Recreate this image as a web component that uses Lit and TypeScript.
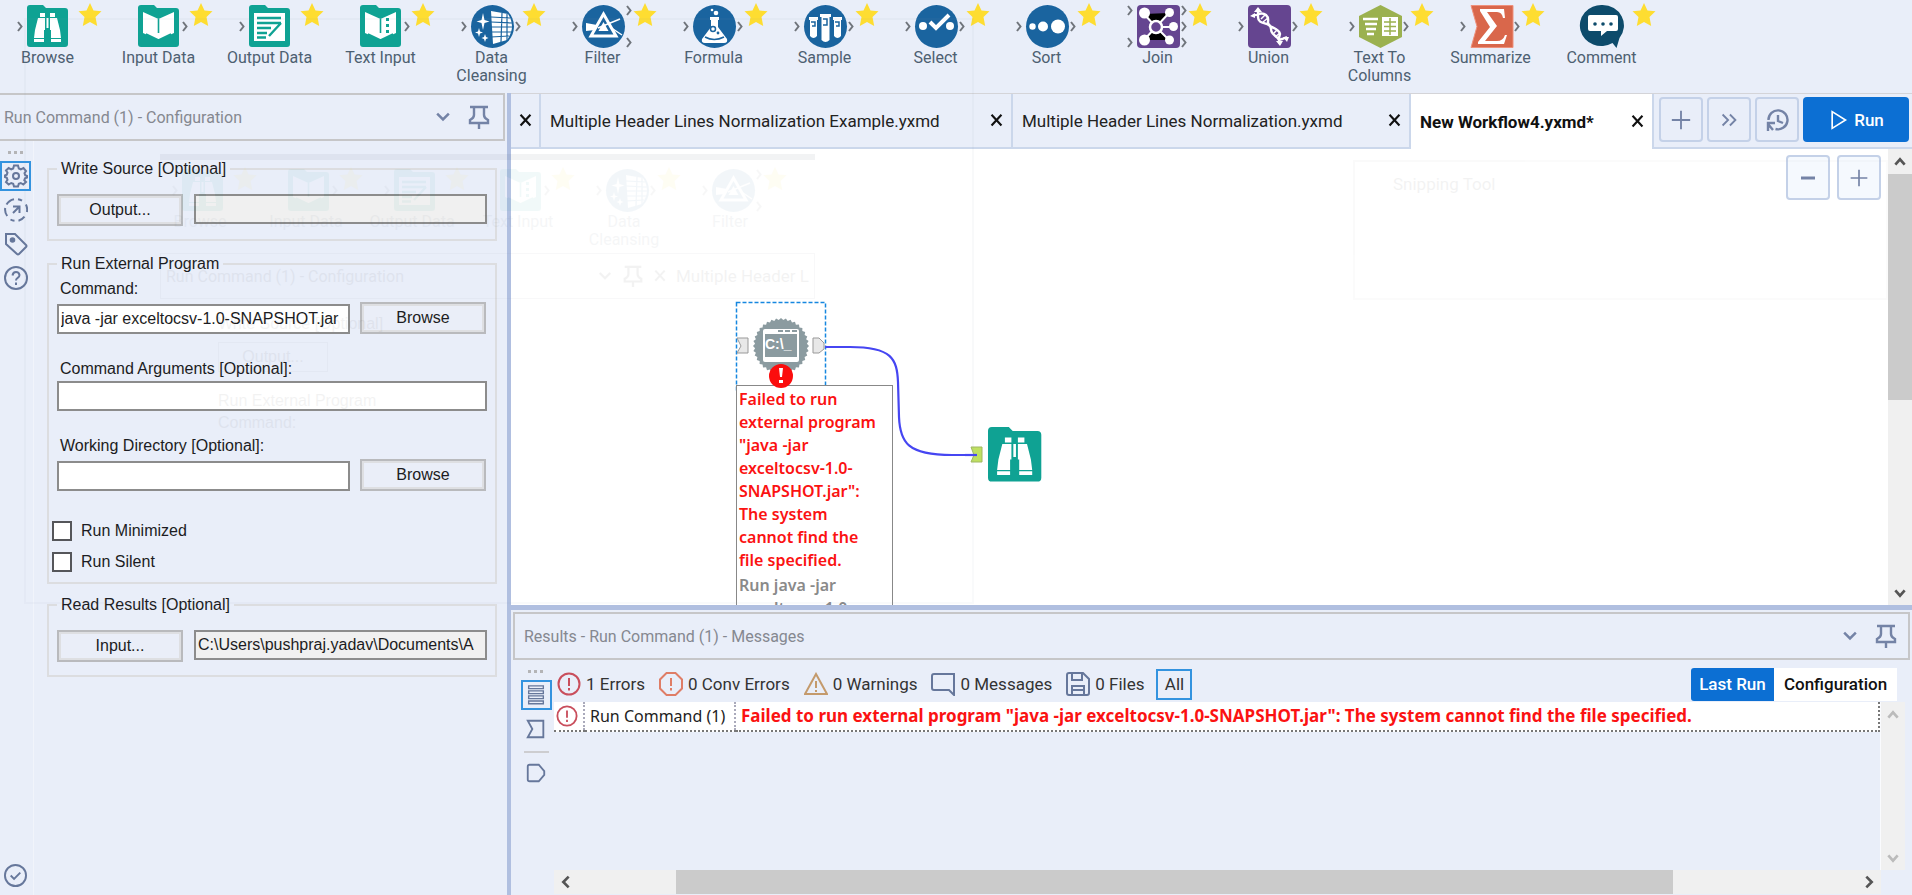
import { LitElement, html, svg, css } from "lit";
import { customElement } from "lit/decorators.js";
import { classMap } from "lit/directives/class-map.js";

const folder = svg`<path fill="#0fa293" d="M3 0h13l3 3h19a3 3 0 0 1 3 3v33a3 3 0 0 1-3 3H3a3 3 0 0 1-3-3V3a3 3 0 0 1 3-3z"/>`;
const disc = svg`<circle cx="21.500" cy="21.500" r="21.500" fill="#1a649f"/>`;
const binoculars = svg`<g fill="#fff"><path d="M13 8h5v4h-5zM23 8h5v4h-5zM11 13h7v12h-1v8H7l1-8zM30 13h-7v12h1v8h10l-1-8zM19.500 13h2v10h-2zM7 34h10v3H7zM24 34h10v3H24z"/></g>`;

interface Tool { name: string; icon: unknown; left: number[]; right: number[]; }

const tools: Tool[] = [
  { name: "Browse", left: [21], right: [], icon: svg`${folder}${binoculars}` },
  { name: "Input Data", left: [], right: [21], icon: svg`${folder}<path fill="#fff" d="M5 7l15.500 7v21L5 28zM36 7l-15.500 7v21L36 28z"/><path fill="none" stroke="#0fa293" stroke-width="1.600" d="M20.500 14v14M8 29l12.500 6 12.500-6"/>` },
  { name: "Output Data", left: [21], right: [], icon: svg`${folder}<path fill="#fff" d="M5 8h31v28H5z"/><path fill="none" stroke="#0fa293" stroke-width="2.400" d="M8 13h24M8 18h24M8 23h14M8 28h10M8 32.500h9M20 31l12-13"/>` },
  { name: "Text Input", left: [], right: [21], icon: svg`${folder}<path fill="#fff" d="M5 7l15.500 7v21L5 28zM36 7l-15.500 7v21L36 28z"/><path fill="none" stroke="#0fa293" stroke-width="1.600" d="M20.500 14v14M8 29l12.500 6 12.500-6"/><path fill="#0fa293" d="M26 13h3v3h-3zM26 19h3v3h-3zM26 25h3v3h-3z"/>` },
  { name: "Data Cleansing", left: [21], right: [21], icon: svg`${disc}<path fill="#fff" d="M12 8l1.500 7 5 1.500-5 1.500L12 25l-1.500-7-5-1.500 5-1.500zM8 23l1 3.500 3 1-3 1L8 32l-1-3.500-3-1 3-1zM14 29l1 3 2.500 1-2.500 1-1 3-1-3-2.500-1 2.500-1zM20 6l17 3q4 6 4 12.500T36 35l-14 4z"/><path fill="none" stroke="#1a649f" stroke-width="1.200" d="M20 12l19 1M20 17l21 1M20 22h21M20 27h21M20 32l18-1M31 8l-1 29M36 9v27"/>` },
  { name: "Filter", left: [21], right: [5, 37], icon: svg`${disc}<path fill="none" stroke="#fff" stroke-width="3" d="M21.500 9L34 31H9z"/><path fill="#fff" d="M4 18l11 2-2 5-9 1z"/><path stroke="#fff" stroke-width="1.500" d="M16 23l22-9M28 22l12 8"/><path fill="#fff" d="M21.500 17l5 9h-10z"/>` },
  { name: "Formula", left: [21], right: [21], icon: svg`${disc}<path fill="#fff" d="M17 12h9v3h-1v7l9 12q1 4-3 4H12q-4 0-3-4l9-12v-7h-1z"/><circle cx="23" cy="8" r="2.300" fill="#fff"/><circle cx="19" cy="5" r="1.300" fill="#fff"/><path fill="none" stroke="#1a649f" stroke-width="1.600" d="M12 32q9 5 19 0"/><circle cx="20" cy="24" r="2.500" fill="none" stroke="#1a649f" stroke-width="1.500"/><circle cx="25" cy="28" r="1.400" fill="#1a649f"/>` },
  { name: "Sample", left: [21], right: [21], icon: svg`${disc}<path fill="#fff" d="M5 12h9v3h-1v16q-3.500 4-7 0V15H5zM16 9h11v3h-1.500v23q-4 4-8 0V12H16zM29 12h9v3h-1v16q-3.500 4-7 0V15h-1z"/><path fill="none" stroke="#1a649f" stroke-width="1.500" d="M7 17h4v4H8M19 14h4v6h-4M31 17h4v4h-3"/>` },
  { name: "Select", left: [21], right: [21], icon: svg`${disc}<circle cx="8" cy="21" r="4" fill="#fff"/><circle cx="35" cy="21" r="4" fill="#fff"/><path fill="none" stroke="#fff" stroke-width="4" d="M15 17l6 6 13-13"/>` },
  { name: "Sort", left: [21], right: [21], icon: svg`${disc}<circle cx="6.500" cy="21.500" r="3.200" fill="#fff"/><circle cx="17" cy="21.500" r="5" fill="#fff"/><circle cx="32" cy="21.500" r="7" fill="#fff"/>` },
  { name: "Join", left: [5, 37], right: [5, 21, 37], icon: svg`<rect width="43" height="43" rx="4" fill="#654590"/><g stroke="#fff" stroke-width="2"><path d="M7 9l12 13 13-14M19 22h17M7 35l12-13 13 13"/></g><g fill="#fff"><circle cx="7.500" cy="8" r="5.500"/><circle cx="32.500" cy="7.500" r="4.500"/><circle cx="36.500" cy="21.500" r="4.500"/><circle cx="7.500" cy="35" r="5.500"/><circle cx="32.500" cy="35" r="4.500"/></g><circle cx="19" cy="22" r="6" fill="#654590" stroke="#fff" stroke-width="2.500"/>` },
  { name: "Union", left: [21], right: [21], icon: svg`<rect width="43" height="43" rx="4" fill="#654590"/><g fill="none" stroke="#fff" stroke-width="2.400"><path d="M10 5v7c0 9 13 4 13 12s9 6 9 15M5 11l5-2c7-2 11 2 10 8s11 5 12 12l-1 4q0 2 3 1l5-2"/></g><path fill="#fff" d="M10 2l4 5H6zM2 11l5-3v5zM32 41l-4-5h7zM41 32l-6 0 4 5z"/><path stroke="#fff" stroke-width="1.500" d="M13 14l4-4M15 17l5-4M25 29l4-4M27 32l5-4"/>` },
  { name: "Text To Columns", left: [21], right: [21], icon: svg`<path fill="#9bb14f" d="M21.500 0L43 11v21L21.500 43 0 32V11z"/><g fill="none" stroke="#fff" stroke-width="2.600"><path d="M4 14h15M6 19h12M7 24h10M8 29h7"/></g><path fill="#fff" d="M23 12h16v19H23z"/><path fill="none" stroke="#9bb14f" stroke-width="1.500" d="M25 17h12M25 21.500h12M25 26h12M31 13v17"/>` },
  { name: "Summarize", left: [21], right: [21], icon: svg`<path fill="#d9674b" stroke="#ef917c" d="M1 .500h42v42H1l6-21z"/><path fill="#fff" d="M10 4h24l1 9h-2q-1-6-6-6H17l10 14-12 15h12q6 0 8-6h2l-3 9H8v-2l12-15L10 6z"/>` },
  { name: "Comment", left: [], right: [], icon: svg`<path fill="#0d4b6b" d="M21.500 0a21.500 20.500 0 0 1 17 33l-3 10-4-5a21.500 20.500 0 1 1-10-38z"/><path fill="#fff" d="M9 10h26q2 0 2 2v12q0 2-2 2h-9l-6 5v-5H9q-2 0-2-2V12q0-2 2-2z"/><g fill="#0d4b6b"><circle cx="14" cy="19" r="1.800"/><circle cx="22" cy="19" r="1.800"/><circle cx="30" cy="19" r="1.800"/></g>` },
];

const toolArt = (t: Tool) => html`<svg class="art" viewBox="0 0 96 48" width="96" height="48" aria-hidden="true">
  <g transform="translate(21 5)">${t.icon}</g>
  <g fill="none" stroke="#70757c" stroke-width="2">
    ${t.left.map((y) => svg`<path d="M12 ${y + 1}l3.500 4.500-3.500 4.500"/>`)}
    ${t.right.map((y) => svg`<path d="M66 ${y + 1}l3.500 4.500-3.500 4.500"/>`)}
  </g>
  <path fill="#fedd31" d="M84 3l3.500 7.500 8 .8-6 5.600 1.700 9.100L84 22l-7.200 4 1.700-9.100-6-5.600 8-.8z"/>
</svg>`;

const icon = (body: unknown, size = 24) =>
  html`<svg viewBox="0 0 24 24" width=${size} height=${size} fill="none" stroke="currentColor" stroke-width="2" aria-hidden="true">${body}</svg>`;

const dots = html`<svg class="dots" viewBox="0 0 16 4" width="16" height="4" fill="#b4b4b6" aria-hidden="true"><path d="M0 0h3v3H0zM6 0h3v3H6zM12 0h3v3h-3z"/></svg>`;
const chevronDown = svg`<path d="M5 8l7 7 7-7" stroke-width="3"/>`;
const pin = svg`<path d="M3 2h18M7 2v8q0 3-4 5v3h18v-3q-4-2-4-5V2M12 18v7" stroke-width="2.400"/>`;
const cross = svg`<path d="M5 4l14 15M19 4L5 19" stroke-width="3"/>`;
const plus = svg`<path d="M12 2v20M2 12h20"/>`;
const minus = svg`<path d="M5 12h14" stroke-width="3"/>`;
const more = svg`<path d="M5 6l6 6-6 6M13 6l6 6-6 6"/>`;
const history = svg`<path d="M3.500 12a9.500 9.500 0 1 1 7 9M13 7v6l5 2M10 15H3v8M3 16l5 6" stroke-width="2.400"/>`;
const gear = svg`<circle cx="12" cy="12" r="3"/><path d="M10 1.500h4l.8 3 2 .8L19.500 4 22 7l-1.500 2.200.7 2 1.800.8v1.500l-2 .8-.7 2L22 18l-2.700 2.500-2.500-1.500-2 .8-.8 2.700h-4l-.8-2.700-2-.8-2.500 1.500L2 18l1.500-2.200-.7-2L1 13v-1.500l1.800-.8.7-2L2 6.500 4.700 4l2.500 1.300 2-.8z"/>`;
const target = svg`<path d="M10 1.200A11 11 0 0 0 2.500 6.500M1.200 10a11 11 0 0 0 2 8M6.500 21.500a11 11 0 0 0 4 1.300M14.500 22.700a11 11 0 0 0 6-4M22.900 14a11 11 0 0 0-1-7.500M18 2.700a11 11 0 0 0-4-1.500M9 15l6-6M9 8.500h6.500V15"/>`;
const tag = svg`<path d="M2 2h9l11 11q1 1 0 2l-7 7q-1 1-2 0L2 12z"/><circle cx="8.500" cy="8" r="1.800" fill="currentColor"/>`;
const help = svg`<circle cx="12" cy="12" r="11"/><path d="M8.500 9.500Q9 6 12 6t3.500 3q0 2-2 3-1.500 1-1.500 2.500M12 16.500V19"/>`;
const checked = svg`<circle cx="12" cy="12" r="11"/><path d="M7 12l3.500 3.500L17 9"/>`;
const alert = svg`<circle cx="12" cy="12" r="10.500"/><path d="M12 6v8M12 16v2.500"/>`;
const octagon = svg`<path d="M7.500 1h9L23 7.500v9L16.500 23h-9L1 16.500v-9zM12 6v8M12 16v2.500"/>`;
const warning = svg`<path d="M12 2L23 22H1zM12 9v7M12 18v2"/>`;
const message = svg`<path d="M3 2h20v21l-5-5H3q-2 0-2-2V4q0-2 2-2z"/>`;
const disk = svg`<path d="M1 3q0-2 2-2h14l6 6v14q0 2-2 2H3q-2 0-2-2zM6 1v7h10V2M6 23v-9h12v9M7 18h10"/>`;
const list = svg`<path d="M4 2h16v3H4zM4 7.500h16v3H4zM4 13h16v3H4zM4 18.500h16v3H4z" stroke-width="1.500"/>`;
const inbound = svg`<path d="M3 3h17v18H3l5-9z"/>`;
const outbound = svg`<path d="M5 3h10l6 7v4l-6 7H5q-2 0-2-2V5q0-2 2-2z"/>`;
const up = svg`<path d="M5 16l7-8 7 8" stroke-width="4"/>`;
const down = svg`<path d="M5 8l7 8 7-8" stroke-width="4"/>`;
const leftArrow = svg`<path d="M16 4l-8 8 8 8" stroke-width="4"/>`;
const rightArrow = svg`<path d="M8 4l8 8-8 8" stroke-width="4"/>`;

const teeth = Array.from({ length: 72 }, (_, i) => {
  const r = i % 2 ? 26 : 28;
  const a = (i * Math.PI) / 36;
  return `${(45 + r * Math.cos(a)).toFixed(1)},${(44 + r * Math.sin(a)).toFixed(1)}`;
}).join(" ");

@customElement("app-root")
export class AppRoot extends LitElement {
  static styles = css`
    :host { display: block; font-family: Roboto, "Liberation Sans", sans-serif; font-size: 16px; color: #222; }
    * { box-sizing: border-box; }
    button, input { font: inherit; color: inherit; }
    button { padding: 0; border: 0; background: none; display: flex; align-items: center; justify-content: center; }
    svg { display: block; flex: none; }
    .app { position: relative; display: flex; flex-direction: column; height: 100vh; min-height: 760px; background: #e9eef9; overflow: hidden; }
    .tools { display: flex; flex: none; height: 93px; }
    .tool { display: flex; flex: none; width: 111px; flex-direction: column; align-items: center; justify-content: flex-start; color: #4d6071; line-height: 18px; }
    .tool .art { align-self: flex-start; margin-left: 6px; }
    .tool .name { width: 86px; margin: 1px 0 0 -16px; text-align: center; }
    .main { display: grid; grid-template-columns: 507px 4px minmax(0, 1fr); flex: 1; min-height: 0; }
    .split { background: #b0bfe0; }
    .panel { display: flex; flex-direction: column; min-width: 0; min-height: 0; }
    .head { display: flex; align-items: center; flex: none; height: 48px; border: 2px solid #c6c6c8; color: #858890; }
    .head h2 { margin: 0; font-size: 16px; font-weight: 400; flex: 1; }
    .head button { color: #7483a6; width: 36px; height: 40px; }
    .config .head { border-left: 0; margin-right: 2px; padding: 0 6px 0 4px; }
    .body { display: flex; flex: 1; min-height: 0; }
    .rail { display: flex; flex-direction: column; align-items: center; flex: none; width: 34px; padding: 10px 2px 8px 0; border-right: 1px solid #f1f4fb; color: #66779b; }
    .rail button { width: 31px; height: 34px; }
    .rail .on { height: 30px; border: 2px solid #3393df; margin-bottom: 2px; }
    .rail .dots { margin-bottom: 6px; }
    .rail .last { margin-top: auto; height: 24px; }
    .form { flex: 1; min-width: 0; padding: 17px 10px 0 13px; font-family: "Liberation Sans", Arial, sans-serif; color: #1c1c22; }
    fieldset { margin: 0 0 12px; padding: 0 8px 13px; border: 2px solid #dcdde0; min-width: 0; }
    legend { padding: 0 4px; line-height: 22px; }
    .row { display: grid; grid-template-columns: 126px minmax(0, 1fr); gap: 11px; padding-top: 14px; }
    .row.end { grid-template-columns: minmax(0, 1fr) 126px; gap: 10px; padding: 1px 1px 0 0; align-items: end; }
    .field { display: block; line-height: 24px; padding-left: 3px; }
    .push { height: 32px; border: 2px solid #b9babd; background: #eaeef8; box-shadow: inset 0 0 0 2px #dedfe2; }
    .text { width: 100%; height: 30px; border: 2px solid #8c8c8c; background: #fff; padding: 0 2px; border-radius: 0; outline: 0; }
    .text[readonly] { background: #f0f0f0; }
    .gap { padding-top: 23px; }
    .check { display: flex; align-items: center; gap: 9px; height: 31px; margin-left: -5px; }
    .check input { appearance: none; width: 20px; height: 20px; margin: 0; border: 2px solid #55565a; background: #fff; }
    .checks { padding-top: 24px; }
    .wide { padding-top: 2px; padding-bottom: 5px; margin-bottom: 10px; }
    .tabs { display: flex; flex: none; height: 56px; border-top: 1px solid #d4d4d8; border-bottom: 2px solid #cbd7eb; }
    .tab { display: flex; align-items: center; border-right: 2px solid #cbd7eb; color: #222; font-size: 17px; }
    .tab a { color: inherit; text-decoration: none; white-space: nowrap; flex: 1; padding-left: 9px; }
    .tab button { width: 29px; height: 40px; color: #111; }
    .t0 { width: 30px; } .t1 { width: 472px; } .t2 { width: 398px; } .t3 { width: 243px; }
    .tab.active { background: #fff; margin-bottom: -2px; color: #111; font-weight: 700; }
    .acts { display: flex; gap: 4px; padding: 3px 3px 6px 5px; flex: 1; }
    .square { width: 44px; height: 45px; border: 2px solid #c4d1e8; border-radius: 4px; color: #7483a6; }
    .run { flex: 1; height: 45px; border-radius: 4px; background: #0c6fd3; color: #fff; gap: 6px; font-size: 17px; font-weight: 500; }
    .canvas { display: flex; flex: 1; min-height: 0; background: #fff; }
    .stage { position: relative; flex: 1; overflow: hidden; }
    .wires { position: absolute; left: 0; top: 0; width: 100%; height: 100%; }
    .zoom { position: absolute; right: 7px; top: 6px; display: flex; gap: 7px; }
    .zoom .square { background: #f5f9fe; }
    .note { position: absolute; left: 225px; top: 236px; width: 157px; margin: 0; padding: 2px 14px 2px 2px; border: 1px solid #888; background: #fff; font: 600 16px/23px "Noto Sans", "Open Sans", sans-serif; color: #fb1212; }
    .note p { margin: 0; }
    .note .sub { color: #8a8a8a; padding-top: 2px; }
    .bar { display: flex; flex-direction: column; justify-content: space-between; align-items: center; width: 24px; background: #f0f0f0; color: #555; flex: none; }
    .bar button { width: 24px; height: 25px; }
    .thumb { background: #cbcbcb; }
    .canvas .thumb { width: 24px; height: 226px; margin-bottom: auto; }
    .results { flex: none; height: 290px; border-top: 5px solid #b0bfe0; padding-top: 2px; }
    .results .head { margin: 0 2px; padding: 0 4px 0 9px; }
    .results .rail { width: 43px; padding-left: 9px; border: 0; }
    .results .sep { width: 25px; height: 2px; background: #cdcdd0; margin: 5px 0 3px; }
    .out { display: flex; flex-direction: column; flex: 1; min-width: 0; padding: 6px 7px 1px 0; }
    .filters { display: flex; align-items: center; height: 36px; gap: 14px; padding: 0 8px 0 3px; flex: none; font-size: 17px; }
    .filters button { gap: 5px; white-space: nowrap; color: #333; height: 33px; }
    .filters .all { border: 2px solid #3393df; height: 31px; width: 36px; margin-left: -2px; }
    .filters .red { color: #c94e5c; }
    .red { color: #c94e5c; } .orange { color: #df7d66; } .tan { color: #c49a6c; } .slate { color: #66779b; }
    .switch { display: flex; margin-left: auto; }
    .switch button { width: 123px; background: #fff; color: #111; font-weight: 500; }
    .switch .sel { width: 83px; background: #0c6fd3; color: #fff; border-radius: 3px 0 0 3px; }
    .log { display: flex; flex: 1; min-height: 0; }
    .tablebox { flex: 1; min-width: 0; border-right: 1px solid #fafbfe; }
    table { width: 100%; border-collapse: collapse; background: #fff; font-family: "Noto Sans", "Open Sans", sans-serif; }
    td { height: 29px; padding: 0 5px; border-bottom: 2px dotted #777; line-height: 24px; white-space: nowrap; }
    td + td { border-left: 2px dotted #aab; }
    td:first-child { width: 30px; padding: 0 0 0 2px; }
    td:nth-child(2) { width: 151px; }
    td:last-child { color: #fb1212; font-size: 17px; font-weight: 700; border-right: 2px dotted #777; }
    .log .bar { color: #bbb; }
    .hbar { display: flex; align-items: center; flex: none; height: 24px; margin-right: 24px; background: #f0f0f0; color: #555; }
    .hbar button { width: 24px; height: 24px; }
    .hbar .track { flex: 1; height: 24px; padding: 0 184px 0 98px; display: flex; }
    .hbar .thumb { flex: 1; }
    .fade { position: absolute; inset: 0; pointer-events: none; opacity: 0.05; }
    .fade .snap { position: absolute; left: 160px; top: 154px; width: 655px; height: 290px; border-top: 6px solid #234; overflow: hidden; }
    .fade .tools { padding-top: 4px; margin-left: -5px; height: 93px; }
    .fade .tool { width: 106px; }
    .fade .pane { display: flex; align-items: center; gap: 8px; padding: 0 5px; border: 1px solid #889; height: 46px; white-space: nowrap; font-size: 17px; }
    .fade .pane span { flex: 1; font-size: 16px; }
    .fade .lines { padding: 14px 58px; font: 16px/22px "Liberation Sans", Arial, sans-serif; }
    .fade .lines p { margin: 0; }
    .fade .lines .box { width: 110px; margin: 7px 0 18px; border: 1px solid #889; line-height: 28px; text-align: center; }
    .fade .frame { position: absolute; left: 24px; top: 18px; width: 950px; height: 586px; border: 2px solid #89a; }
    .fade .snip { position: absolute; left: 1353px; top: 160px; width: 535px; height: 140px; padding: 12px 38px; border: 2px solid #aaa; font-size: 17px; }
  `;

  private tab(cls: string, name: string) {
    return html`<div class=${classMap({ tab: true, [cls]: true, active: cls === "t3" })}>
      ${name ? html`<a href="#">${name}</a>` : ""}
      <button aria-label="Close tab">${icon(cross, 17)}</button>
    </div>`;
  }

  render() {
    return html`<div class="app">
      <nav class="tools" aria-label="Favorite tools">
        ${tools.map((t) => html`<button class="tool">${toolArt(t)}<span class="name">${t.name}</span></button>`)}
      </nav>
      <div class="main">
        <section class="panel config">
          <header class="head"><h2>Run Command (1) - Configuration</h2>
            <button aria-label="Collapse">${icon(chevronDown, 20)}</button><button aria-label="Pin">${icon(pin)}</button></header>
          <div class="body">
            <nav class="rail" aria-label="Configuration views">
              ${dots}
              <button class="on" aria-label="Settings">${icon(gear, 24)}</button>
              <button aria-label="Navigation">${icon(target)}</button>
              <button aria-label="Annotation">${icon(tag)}</button>
              <button aria-label="Help">${icon(help)}</button>
              <button class="last" aria-label="Status">${icon(checked, 23)}</button>
            </nav>
            <form class="form">
              <fieldset><legend>Write Source [Optional]</legend>
                <div class="row"><button type="button" class="push">Output...</button><input class="text" aria-label="Output path" readonly></div>
              </fieldset>
              <fieldset class="wide"><legend>Run External Program</legend>
                <label class="field" for="cmd">Command:</label>
                <div class="row end"><input class="text" id="cmd" value="java -jar exceltocsv-1.0-SNAPSHOT.jar"><button type="button" class="push">Browse</button></div>
                <div class="gap"><label class="field" for="args">Command Arguments [Optional]:</label><input class="text" id="args"></div>
                <div class="gap"><label class="field" for="dir">Working Directory [Optional]:</label>
                  <div class="row end"><input class="text" id="dir"><button type="button" class="push">Browse</button></div></div>
                <div class="checks"><label class="check"><input type="checkbox">Run Minimized</label>
                  <label class="check"><input type="checkbox">Run Silent</label></div>
              </fieldset>
              <fieldset><legend>Read Results [Optional]</legend>
                <div class="row"><button type="button" class="push">Input...</button><input class="text" aria-label="Input path" readonly value="C:\\Users\\pushpraj.yadav\\Documents\\A"></div>
              </fieldset>
            </form>
          </div>
        </section>
        <div class="split"></div>
        <section class="panel">
          <div class="tabs">
            ${this.tab("t0", "")}${this.tab("t1", "Multiple Header Lines Normalization Example.yxmd")}${this.tab("t2", "Multiple Header Lines Normalization.yxmd")}${this.tab("t3", "New Workflow4.yxmd*")}
            <div class="acts">
              <button class="square" aria-label="New workflow">${icon(plus, 22)}</button>
              <button class="square" aria-label="More tabs">${icon(more, 22)}</button>
              <button class="square" aria-label="History">${icon(history)}</button>
              <button class="run">${icon(svg`<path d="M5 2l16 10-16 10z"/>`, 20)}Run</button>
            </div>
          </div>
          <div class="canvas">
            <div class="stage">
              <svg class="wires" aria-hidden="true">
                <g transform="translate(225 153)">
                  <rect x=".5" y=".5" width="89" height="90" fill="none" stroke="#1687e0" stroke-width="1.500" stroke-dasharray="4 2"/>
                  <path d="M1 36h11v15H1l4-7zM77 36h6l5 5v6l-5 4h-6z" fill="#e8e8e8" stroke="#999"/>
                  <polygon points=${teeth} fill="#8b9ba0"/>
                  <rect x="27" y="27" width="36" height="33" rx="2" fill="#fff"/>
                  <path fill="#8b9ba0" d="M29 32h32v23H29zM42 28h5v2h-5zM49 28h5v2h-5zM56 28h5v2h-5z"/>
                  <text x="29" y="47" font-size="14" font-weight="700" fill="#fff" font-family="Liberation Sans">C:\\_</text>
                </g>
                <path d="M314 198h25c42 0 47 12 48 35l1 35c1 25 8 38 53 38h23" fill="none" stroke="#4646f2" stroke-width="2.200"/>
                <path d="M460 298h11v15h-11l3-7z" fill="#bfe060" stroke="#a0b860"/><path d="M454 306h12" stroke="#4646f2" stroke-width="2.200"/>
                <g transform="translate(477 278) scale(1.300)">${folder}${binoculars}</g>
              </svg>
              <div class="note"><p>Failed to run external program "java -jar exceltocsv-1.0-SNAPSHOT.jar": The system cannot find the file specified.</p><p class="sub">Run java -jar exceltocsv-1.0-SNAPSHOT.jar</p></div>
              <svg class="wires" aria-hidden="true"><circle cx="270" cy="227" r="12" fill="#fb0d0d"/><path d="M268 219h4l-1 9h-2zM268 231h4v3h-4z" fill="#fff"/></svg>
              <div class="zoom"><button class="square" aria-label="Zoom out">${icon(minus)}</button><button class="square" aria-label="Zoom in">${icon(plus, 20)}</button></div>
            </div>
            <div class="bar"><button aria-label="Scroll up">${icon(up, 16)}</button><div class="thumb"></div><button aria-label="Scroll down">${icon(down, 16)}</button></div>
          </div>
          <section class="panel results">
            <header class="head"><h2>Results - Run Command (1) - Messages</h2>
              <button aria-label="Collapse">${icon(chevronDown, 20)}</button><button aria-label="Pin">${icon(pin)}</button></header>
            <div class="body">
              <nav class="rail" aria-label="Result views">
                ${dots}
                <button class="on" aria-label="Messages">${icon(list, 22)}</button>
                <button aria-label="Input anchor">${icon(inbound, 22)}</button>
                <span class="sep"></span>
                <button aria-label="Output anchor">${icon(outbound, 22)}</button>
              </nav>
              <div class="out">
                <div class="filters">
                  <button><span class="red">${icon(alert)}</span>1 Errors</button>
                  <button><span class="orange">${icon(octagon)}</span>0 Conv Errors</button>
                  <button><span class="tan">${icon(warning)}</span>0 Warnings</button>
                  <button><span class="slate">${icon(message)}</span>0 Messages</button>
                  <button><span class="slate">${icon(disk)}</span>0 Files</button>
                  <button class="all">All</button>
                  <div class="switch"><button class="sel">Last Run</button><button>Configuration</button></div>
                </div>
                <div class="log">
                  <div class="tablebox"><table><tr><td><span class="red">${icon(alert, 22)}</span></td><td>Run Command (1)</td><td>Failed to run external program "java -jar exceltocsv-1.0-SNAPSHOT.jar": The system cannot find the file specified.</td></tr></table></div>
                  <div class="bar"><button aria-label="Scroll up">${icon(up, 16)}</button><button aria-label="Scroll down">${icon(down, 16)}</button></div>
                </div>
                <div class="hbar"><button aria-label="Scroll left">${icon(leftArrow, 16)}</button><div class="track"><div class="thumb"></div></div><button aria-label="Scroll right">${icon(rightArrow, 16)}</button></div>
              </div>
            </div>
          </section>
        </section>
      </div>
      <div class="fade" aria-hidden="true">
        <div class="frame"></div>
        <div class="snap">
          <div class="tools">${tools.slice(0, 6).map((t) => html`<div class="tool">${toolArt(t)}<span class="name">${t.name}</span></div>`)}</div>
          <div class="pane"><span>Run Command (1) - Configuration</span>${icon(chevronDown, 18)}${icon(pin, 22)}${icon(cross, 16)}Multiple Header L</div>
          <div class="lines"><p>Write Source [Optional]</p><p class="box">Output...</p><p>Run External Program</p><p>Command:</p></div>
        </div>
        <div class="snip">Snipping Tool</div>
      </div>
    </div>`;
  }
}
